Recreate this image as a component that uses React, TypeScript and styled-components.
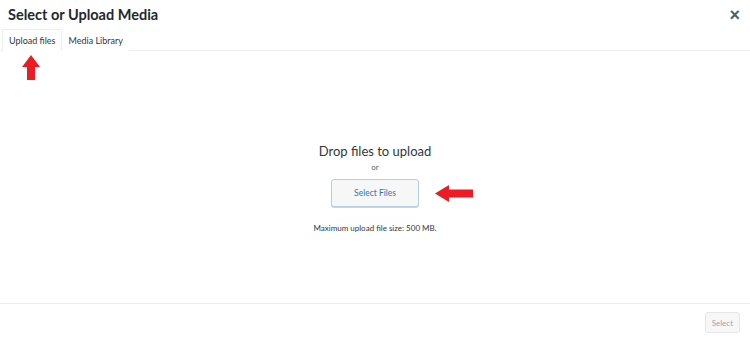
import styled, { createGlobalStyle } from 'styled-components'

const Global = createGlobalStyle`
  html, body { margin: 0; padding: 0; background: #fff; }
  body { font-family: Lato, "Noto Sans", sans-serif; color: #23282d; }
`

const Modal = styled.div`
  width: 750px;
  height: 341px;
  display: flex;
  flex-direction: column;
  background: #fff;
`

const Header = styled.div`
  height: 29px;
  display: flex;
  align-items: center;
  justify-content: space-between;
  padding: 0 10px 0 8px;
`

const Title = styled.h1`
  margin: 0;
  font-size: 14.5px;
  font-weight: 700;
  color: #23282d;
`

const Close = styled.button`
  border: 0;
  background: none;
  padding: 0;
  font-size: 18px;
  line-height: 1;
  color: #555d66;
  font-weight: 700;
  cursor: pointer;
`

const Tabs = styled.div`
  height: 21px;
  display: flex;
  padding-left: 2px;
  border-bottom: 1px solid #eeeeee;
`

const Tab = styled.div<{ $active?: boolean }>`
  position: relative;
  padding: 0 5px 0 6px;
  font-size: 9px;
  display: flex;
  align-items: center;
  color: #32373c;
  border: 1px solid ${p => (p.$active ? '#eeeeee' : 'transparent')};
  border-bottom: ${p => (p.$active ? '1px solid #fff' : '0')};
  margin-bottom: -1px;
  background: #fff;
`

const UpArrow = styled.svg`
  position: absolute;
  left: 19px;
  top: 25px;
`

const Content = styled.div`
  flex: 1;
  display: flex;
  flex-direction: column;
  align-items: center;
  padding-top: 92px;
`

const Drop = styled.div`
  font-size: 13px;
  color: #32373c;
  line-height: 17px;
`

const Or = styled.div`
  font-size: 8px;
  color: #555d66;
  margin-top: 2px;
  line-height: 11px;
`

const ButtonRow = styled.div`
  position: relative;
  margin-top: 6px;
`

const SelectFiles = styled.button`
  width: 88px;
  height: 28px;
  border: 1px solid #b7cde2;
  border-radius: 3px;
  background: #f6f7f7;
  color: #2f73b5;
  font-family: inherit;
  font-size: 8.5px;
  box-shadow: 0 1px 0 #ccd6e0;
`

const LeftArrow = styled.svg`
  position: absolute;
  left: 104px;
  top: 6px;
`

const Max = styled.p`
  margin: 16px 0 0;
  font-size: 8px;
  color: #32373c;
`

const Footer = styled.div`
  height: 37px;
  border-top: 1px solid #eeeeee;
  display: flex;
  align-items: center;
  justify-content: flex-end;
  padding-right: 10px;
`

const SelectBtn = styled.button`
  height: 21px;
  padding: 0 6px;
  border: 1px solid #e4e6e8;
  border-radius: 3px;
  background: #f7f7f7;
  color: #a0a5aa;
  font-family: inherit;
  font-size: 8px;
`

export default function App() {
  return (
    <Modal>
      <Global />
      <Header>
        <Title>Select or Upload Media</Title>
        <Close>×</Close>
      </Header>
      <Tabs>
        <Tab $active>
          Upload files
          <UpArrow width="18" height="25" viewBox="0 0 18 25">
            <path d="M9 0 L18 12 L13 12 L13 25 L5 25 L5 12 L0 12 Z" fill="#ed1c24" />
          </UpArrow>
        </Tab>
        <Tab>Media Library</Tab>
      </Tabs>
      <Content>
        <Drop>Drop files to upload</Drop>
        <Or>or</Or>
        <ButtonRow>
          <SelectFiles>Select Files</SelectFiles>
          <LeftArrow width="38" height="17" viewBox="0 0 38 17">
            <path d="M0 8.5 L14 0 L14 4.5 L38 4.5 L38 12.5 L14 12.5 L14 17 Z" fill="#ed1c24" />
          </LeftArrow>
        </ButtonRow>
        <Max>Maximum upload file size: 500 MB.</Max>
      </Content>
      <Footer>
        <SelectBtn>Select</SelectBtn>
      </Footer>
    </Modal>
  )
}
